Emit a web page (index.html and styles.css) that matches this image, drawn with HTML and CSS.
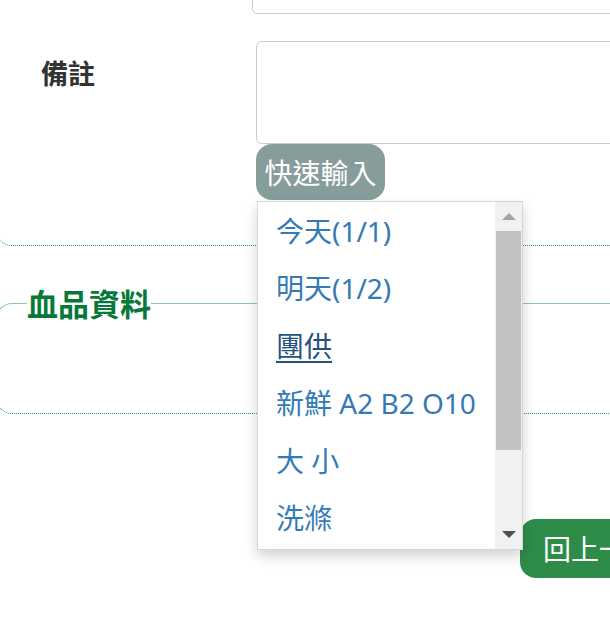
FILE: index.html
```html
<!DOCTYPE html>
<html lang="zh-Hant">
<head>
<meta charset="utf-8">
<title>備註</title>
<link rel="stylesheet" href="styles.css">
</head>
<body>
<div class="page">
  <fieldset class="box box-top">
    <div class="row row-first">
      <div class="label"></div>
      <input class="field field-short" type="text">
    </div>
    <div class="row">
      <label class="label">備註</label>
      <div class="control">
        <textarea class="memo"></textarea>
        <div class="quick">
          <button class="quick-btn" type="button">快速輸入</button>
          <div class="menu">
            <ul class="menu-list">
              <li class="menu-item">今天(1/1)</li>
              <li class="menu-item">明天(1/2)</li>
              <li class="menu-item is-hover">團供</li>
              <li class="menu-item">新鮮 A2 B2 O10</li>
              <li class="menu-item">大 小</li>
              <li class="menu-item">洗滌</li>
            </ul>
            <div class="scrollbar">
              <div class="sb-btn"><span class="tri tri-up"></span></div>
              <div class="sb-thumb"></div>
              <div class="sb-rest"></div>
              <div class="sb-btn"><span class="tri tri-down"></span></div>
            </div>
          </div>
        </div>
      </div>
    </div>
  </fieldset>
  <fieldset class="box box-blood">
    <legend class="legend">血品資料</legend>
    <div class="blood-body"></div>
  </fieldset>
  <div class="actions">
    <button class="back-btn" type="button">回上一頁</button>
  </div>
</div>
</body>
</html>
```
FILE: styles.css
```css
html, body {
  margin: 0;
  padding: 0;
  background: #fff;
  overflow: hidden;
}
body {
  font-family: "Noto Sans", "Noto Sans CJK TC", sans-serif;
  font-size: 28px;
  color: #333;
  width: 610px;
  height: 623px;
}
.page {
  width: 820px;
  margin-top: -40px;
}
.box {
  margin: 0 0 0 -4px;
  padding: 0;
  min-width: 0;
  border-radius: 16px;
}
.box-top {
  border: 1px dotted #1f9a55;
  padding: 19px 0 45px 0;
}
.row {
  display: grid;
  grid-template-columns: 259px 1fr;
}
.row-first {
  margin-bottom: 27px;
}
.field {
  box-sizing: border-box;
  height: 34px;
  border: 1px solid #ccc;
  border-radius: 5px;
  margin-left: -4px;
  width: 520px;
  background: #fff;
}
.label {
  padding: 11px 0 0 44px;
  line-height: 42px;
  font-weight: 700;
  font-size: 27px;
  color: #333;
  font-family: "Noto Sans CJK TC", sans-serif;
}
.control {
  display: flex;
  flex-direction: column;
  align-items: flex-start;
}
.memo {
  box-sizing: border-box;
  width: 520px;
  height: 103px;
  border: 1px solid #ccc;
  border-radius: 6px;
  margin: 0;
  resize: none;
  display: block;
}
.quick {
  position: relative;
}
.quick-btn {
  display: block;
  box-sizing: border-box;
  height: 56px;
  width: 129px;
  padding: 0;
  border: none;
  border-radius: 16px;
  background: #879d9c;
  color: #fff;
  font-family: "Noto Sans CJK TC", sans-serif;
  font-size: 28px;
  line-height: 56px;
  text-align: center;
}
.menu {
  position: absolute;
  top: 57px;
  left: 1px;
  box-sizing: border-box;
  width: 266px;
  height: 349px;
  border: 1px solid #d6d6d6;
  background: #fff;
  box-shadow: 0 6px 12px rgba(0, 0, 0, 0.18);
  display: flex;
  z-index: 5;
}
.menu-list {
  list-style: none;
  margin: 0;
  padding: 1px 0 0 0;
  flex: 1;
  overflow: hidden;
}
.menu-item {
  height: 57.4px;
  line-height: 57.4px;
  padding-left: 18px;
  color: #337ab7;
  font-family: "Noto Sans", "Noto Sans CJK TC", sans-serif;
  font-size: 28px;
  white-space: nowrap;
}
.menu-item.is-hover {
  color: #23527c;
  text-decoration: underline;
  text-underline-offset: 4px;
}
.scrollbar {
  width: 27px;
  background: #f1f1f1;
  display: flex;
  flex-direction: column;
  align-items: center;
}
.sb-btn {
  height: 29px;
  width: 100%;
  display: flex;
  align-items: center;
  justify-content: center;
}
.sb-thumb {
  width: 25px;
  height: 219px;
  background: #c1c1c1;
}
.sb-rest {
  flex: 1;
}
.tri {
  width: 0;
  height: 0;
  border-left: 7px solid transparent;
  border-right: 7px solid transparent;
}
.tri-up {
  border-bottom: 7px solid #a3a3a3;
}
.tri-down {
  border-top: 7px solid #505050;
}
.box-blood {
  margin-top: 37px;
  border: 1px dotted #1f9a55;
  border-top: 1px solid #86cba0;
  padding: 0 0 0 30px;
}
.legend {
  padding: 0;
  line-height: 40px;
  font-size: 31px;
  font-weight: 700;
  color: #06793a;
  font-family: "Noto Sans CJK TC", sans-serif;
}
.blood-body {
  height: 90px;
}
.actions {
  margin-top: 105px;
  padding-left: 520px;
}
.back-btn {
  display: block;
  box-sizing: border-box;
  height: 59px;
  padding: 0 23px;
  border: none;
  border-radius: 16px;
  background: #2e8c49;
  color: #fff;
  font-family: "Noto Sans CJK TC", sans-serif;
  font-size: 28px;
  line-height: 59px;
  white-space: nowrap;
}
```
